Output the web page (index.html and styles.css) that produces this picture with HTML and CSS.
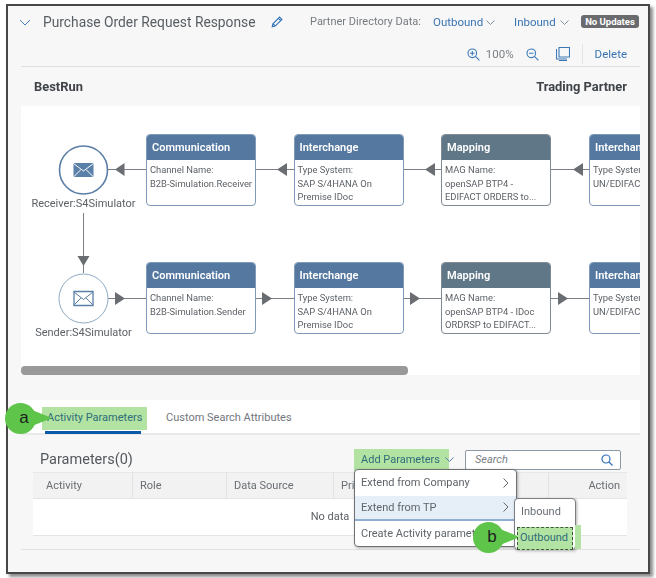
FILE: index.html
```html
<!DOCTYPE html>
<html lang="en">
<head>
<meta charset="utf-8">
<title>Purchase Order Request Response</title>
<link rel="stylesheet" href="styles.css">
</head>
<body>
<main class="frame">
  <header class="title-row">
    <svg class="chev-main" viewBox="0 0 12 7" width="12" height="7"><path d="M1 1l5 5 5-5" fill="none" stroke="#3f7fc0" stroke-width="1"/></svg>
    <h1 class="title">Purchase Order Request Response</h1>
    <svg class="pencil" viewBox="0 0 12 12" width="12" height="12"><path d="M1.2 10.8l.7-3L8.6 1.100l2.300 2.300-6.700 6.700zM7.500 2.300l2.200 2.200M2 7.800l2.200 2.200" fill="none" stroke="#2f72b8" stroke-width="1.100"/></svg>
    <span class="pd-label">Partner Directory Data:</span>
    <span class="link pd-out">Outbound</span>
    <svg class="chev-sm" viewBox="0 0 9 5" width="9" height="5"><path d="M.5.500l4 4 4-4" fill="none" stroke="#7d8fa3"/></svg>
    <span class="link pd-in">Inbound</span>
    <svg class="chev-sm" viewBox="0 0 9 5" width="9" height="5"><path d="M.5.500l4 4 4-4" fill="none" stroke="#7d8fa3"/></svg>
    <span class="badge">No Updates</span>
  </header>

  <div class="toolbar">
    <svg viewBox="0 0 13 13" width="13" height="13"><circle cx="5.300" cy="5.300" r="4.300" fill="none" stroke="#3a78b8" stroke-width="1.100"/><path d="M8.400 8.400l4 4M3 5.300h4.600M5.300 3v4.600" stroke="#3a78b8" stroke-width="1.100"/></svg>
    <span class="zoom-val">100%</span>
    <svg viewBox="0 0 13 13" width="13" height="13"><circle cx="5.300" cy="5.300" r="4.300" fill="none" stroke="#3a78b8" stroke-width="1.100"/><path d="M8.400 8.400l4 4M3 5.300h4.600" stroke="#3a78b8" stroke-width="1.100"/></svg>
    <svg class="tb-copy" viewBox="0 0 14 14" width="14" height="14"><path d="M3 .500h10.500v9.500H3zM1 2.500h-.500v9.500H11M3 13.500h8" fill="none" stroke="#3a78b8" stroke-width="1.100"/></svg>
    <span class="tb-sep"></span>
    <span class="link delete">Delete</span>
  </div>

  <div class="party-row">
    <strong>BestRun</strong>
    <strong>Trading Partner</strong>
  </div>

  <section class="canvas">
    <svg class="wires" viewBox="0 0 619 269" width="619" height="269">
      <g stroke="#7a7f85" stroke-width="1" fill="none">
        <path d="M87 63.500h38M235 63.500h38M383 63.500h37M530 63.500h38M87 192.500h38M235 192.500h38M383 192.500h37M530 192.500h38M62.500 107v60"/>
      </g>
      <g fill="#6a6e73">
        <path d="M94 63.500l9.500-6.500v13zM256 63.500l10-6.500v13zM404 63.500l10-6.500v13zM552 63.500l10-6.500v13z"/>
        <path d="M94 186l10 6.500-10 6.500zM241 186l10 6.500-10 6.500zM389 186l10 6.500-10 6.500zM537 186l10 6.500-10 6.500z"/>
        <path d="M56.500 150h12l-6 10z"/>
      </g>
      <circle cx="62.500" cy="64" r="24" fill="#fff" stroke="#5b7ea6" stroke-width="1.600"/>
      <circle cx="62.500" cy="192.500" r="24.500" fill="#fff" stroke="#8fa9c6" stroke-width="1"/>
      <path d="M52.500 57h20v14h-20z" fill="#5a7fa8"/>
      <path d="M52.500 57.500l10 7.500 10-7.500M52.500 71l7.500-7.500M72.500 71l-7.500-7.500" fill="none" stroke="#fff" stroke-width="1"/>
      <path d="M53 185.500h19v14H53z" fill="#fff" stroke="#5a7fa8" stroke-width="1.300"/>
      <path d="M53 186l9.500 7.500 9.500-7.500M53 199l7-7M72 199l-7-7" fill="none" stroke="#5a7fa8" stroke-width="1"/>
    </svg>
    <span class="ep-label ep-r">Receiver:S4Simulator</span>
    <span class="ep-label ep-s">Sender:S4Simulator</span>

    <article class="node n1 r1"><h3>Communication</h3><p>Channel Name:</p><p>B2B-Simulation.Receiver</p></article>
    <article class="node n2 r1"><h3>Interchange</h3><p>Type System:</p><p class="tight">SAP S/4HANA On</p><p class="tight">Premise IDoc</p></article>
    <article class="node n3 r1 map"><h3>Mapping</h3><p>MAG Name:</p><p class="tight">openSAP BTP4 -</p><p class="tight">EDIFACT ORDERS to...</p></article>
    <article class="node n4 r1"><h3>Interchange</h3><p>Type System:</p><p>UN/EDIFACT</p></article>

    <article class="node n1 r2"><h3>Communication</h3><p>Channel Name:</p><p>B2B-Simulation.Sender</p></article>
    <article class="node n2 r2"><h3>Interchange</h3><p>Type System:</p><p class="tight">SAP S/4HANA On</p><p class="tight">Premise IDoc</p></article>
    <article class="node n3 r2 map"><h3>Mapping</h3><p>MAG Name:</p><p class="tight">openSAP BTP4 - IDoc</p><p class="tight">ORDRSP to EDIFACT...</p></article>
    <article class="node n4 r2"><h3>Interchange</h3><p>Type System:</p><p>UN/EDIFACT</p></article>

    <div class="scroll-thumb"></div>
  </section>

  <nav class="tabs">
    <span class="tab active">Activity Parameters</span>
    <span class="tab">Custom Search Attributes</span>
  </nav>

  <section class="params">
    <div class="params-head">
      <h2>Parameters(0)</h2>
      <div class="add-btn">Add Parameters</div>
      <svg class="chev-add" viewBox="0 0 9 5" width="9" height="5"><path d="M.5.500l4 4 4-4" fill="none" stroke="#4f7fa8"/></svg>
      <div class="search"><em>Search</em>
        <svg viewBox="0 0 12 12" width="12" height="12"><circle cx="5" cy="5" r="4" fill="none" stroke="#2f72b8" stroke-width="1.200"/><path d="M8 8l3.500 3.500" stroke="#2f72b8" stroke-width="1.300"/></svg>
      </div>
    </div>
    <div class="table">
      <div class="thead">
        <span>Activity</span><span>Role</span><span>Data Source</span><span>Pri</span><span class="t-action">Action</span>
      </div>
      <div class="tbody">No data</div>
    </div>
  </section>
  <div class="foot-line"></div>

  <ul class="menu">
    <li>Extend from Company<svg viewBox="0 0 6 10" width="6" height="10"><path d="M.5.500l4.500 4.500-4.500 4.500" fill="none" stroke="#666"/></svg></li>
    <li class="hot">Extend from TP<svg viewBox="0 0 6 10" width="6" height="10"><path d="M.5.500l4.500 4.500-4.500 4.500" fill="none" stroke="#666"/></svg></li>
    <li>Create Activity parameter</li>
  </ul>
  <ul class="submenu">
    <li>Inbound</li>
    <li class="focus">Outbound</li>
  </ul>
  <div class="hl-sub"></div>
  <div class="bubble bubble-a">a</div>
  <div class="bubble bubble-b">b</div>
</main>
</body>
</html>
```
FILE: styles.css
```css
* { box-sizing: border-box; }
html, body { margin: 0; padding: 0; background: #fff; }
body { width: 656px; height: 578px; overflow: hidden; font-family: Roboto, "Open Sans", sans-serif; color: #54595e; }
h1, h2, h3, p, ul { margin: 0; padding: 0; font-weight: normal; }
ul { list-style: none; }

.frame { position: relative; margin: 4px 0 0 6px; width: 644px; height: 570px; border: 2px solid #474747; background: #f7f7f7; box-shadow: 3px 3px 3px rgba(0,0,0,.45); filter: blur(.3px); }

.title-row { height: 32px; display: flex; align-items: center; padding-left: 11px; }
.chev-main { flex: none; }
.title { margin-left: 12px; font-size: 13.800px; color: #595e63; white-space: nowrap; width: 228px; }
.pencil { flex: none; }
.pd-label { margin-left: 27px; font-size: 11px; color: #777c81; width: 123px; white-space: nowrap; margin-top: -2px; }
.link { color: #3a74b2; font-size: 11.500px; white-space: nowrap; }
.pd-out { width: 53px; }
.pd-in { margin-left: 19px; width: 44px; }
.chev-sm { flex: none; margin-left: 0; }
.pd-in + .chev-sm { margin-left: 2px; }
.badge { margin-left: 12px; width: 58px; height: 13px; border-radius: 3px; background: #696b6e; color: #fff; font-size: 9.500px; font-weight: 700; line-height: 13px; text-align: center; white-space: nowrap; margin-top: -2px; }

.toolbar { height: 29px; margin: 0 8px 0 13px; border-bottom: 1px solid #dfdfdf; display: flex; align-items: center; justify-content: flex-end; padding: 4px 13px 0 0; }
.toolbar svg { flex: none; }
.zoom-val { margin: 0 12px 0 6px; font-size: 11.500px; color: #7b8085; }
.tb-copy { margin-left: 17px; }
.tb-sep { width: 1px; height: 20px; background: #e4e4e4; margin: 0 12px 0 12px; }
.delete { font-size: 11.500px; }

.party-row { height: 39px; margin: 0 8px 0 13px; padding: 0 13px; display: flex; align-items: center; justify-content: space-between; font-size: 12.900px; color: #3f4347; }

.canvas { position: relative; height: 269px; margin: 0 8px 0 13px; background: #fff; overflow: hidden; }
.wires { position: absolute; left: 0; top: 0; }
.ep-label { position: absolute; width: 120px; left: 2.500px; text-align: center; font-size: 11px; color: #5c6166; white-space: nowrap; }
.ep-r { top: 91px; }
.ep-s { top: 220px; }

.node { position: absolute; width: 110px; height: 72px; background: #fff; border: 1px solid #7f9ab8; border-radius: 4px; overflow: hidden; font-size: 9.400px; color: #5c6166; }
.node h3 { height: 26px; margin: -1px -1px 3px; background: #5578a0; color: #fff; font-size: 11px; font-weight: 600; line-height: 28px; padding-left: 6px; white-space: nowrap; }
.node p { padding-left: 3px; line-height: 14px; white-space: nowrap; }
.node p.tight { line-height: 13px; }
.node.map { border-color: #7f8a94; }
.node.map h3 { background: #607787; }
.n1 { left: 125px; }
.n2 { left: 272.500px; }
.n3 { left: 420px; }
.n4 { left: 568px; }
.r1 { top: 28px; }
.r2 { top: 156px; }

.scroll-thumb { position: absolute; left: 0; top: 260px; width: 387px; height: 9px; border-radius: 4px; background: #999; }

.tabs { position: relative; z-index: 0; margin: 25px 8px 0 13px; height: 35px; background: #fff; border-bottom: 2px solid #e9e9e9; display: flex; font-size: 11px; padding-left: 25px; }
.tab { position: relative; height: 33px; line-height: 36px; color: #72777c; white-space: nowrap; margin-right: 22px; }
.tab.active { width: 96px; color: #2e6d78; border-bottom: 3px solid #0a5aa8; height: 34px; margin-right: 25px; margin-left: -1px; padding-left: 2px; }
.tab.active::before { content: ""; position: absolute; z-index: -1; left: -3px; top: 7px; width: 105px; height: 23px; background: #b2e3a3; }

.params { margin: 13px 21px 0 25px; }
.params-head { height: 23px; display: flex; align-items: center; }
.params-head h2 { margin-left: 7px; font-size: 14.500px; color: #54595e; width: 314px; white-space: nowrap; }
.add-btn { width: 95px; height: 22px; line-height: 22px; background: #b2e3a3; color: #2e6d78; font-size: 11px; text-align: left; padding-left: 7px; white-space: nowrap; }
.chev-add { margin-left: -4px; flex: none; }
.search { margin-left: 11px; width: 156px; height: 20px; background: #fff; border: 1px solid #8b98a6; border-radius: 2px; display: flex; align-items: center; justify-content: space-between; padding: 0 7px 0 9px; font-size: 11px; color: #7b8085; }

.table { margin-top: 1px; }
.thead { height: 27px; display: grid; grid-template-columns: 100px 94px 107px 215px 78px; background: #f2f2f2; border-top: 1px solid #e7e7e7; border-bottom: 1px solid #e4e4e4; font-size: 11px; color: #696e73; }
.thead span { line-height: 25px; padding-left: 7px; border-right: 1px solid #e2e2e2; white-space: nowrap; }
.thead span:first-child { padding-left: 13px; }
.thead .t-action { text-align: right; padding-right: 7px; border-right: 0; }
.tbody { height: 37px; background: #fff; border-bottom: 1px solid #e4e4e4; text-align: center; line-height: 35px; font-size: 11px; color: #5c6166; }
.foot-line { height: 1px; margin: 13px 8px 0 13px; background: #e2e2e2; }

.menu { position: absolute; left: 346px; top: 463px; width: 163px; height: 78px; background: #fff; border: 1px solid #6e7174; border-radius: 4px; box-shadow: 1px 1px 3px rgba(0,0,0,.3); font-size: 11px; color: #5f6469; overflow: hidden; }
.menu li { height: 25.500px; display: flex; align-items: center; justify-content: space-between; padding: 0 7px 0 6px; white-space: nowrap; }
.menu li.hot { background: #e6eff8; border-bottom: 2px solid #8fb0d2; }
.submenu { position: absolute; left: 506px; top: 492px; width: 62px; height: 52px; background: #fff; border: 1px solid #7b7e81; border-radius: 4px; box-shadow: 1px 1px 3px rgba(0,0,0,.3); font-size: 11px; color: #696e73; }
.submenu li { height: 26px; line-height: 25px; padding-left: 6px; }
.submenu li.focus { position: relative; z-index: 1; height: 23px; margin: 2px 2px 0 2px; padding-left: 3px; line-height: 22px; color: #2e6d78; background: #b2e3a3; outline: 1px dashed #3e5a3a; outline-offset: -1px; }
.hl-sub { position: absolute; left: 567px; top: 519px; width: 6px; height: 24px; background: #b2e3a3; }

.bubble { position: absolute; width: 31px; height: 31px; border-radius: 50%; background: #5fc44a; color: #1d1d1d; font-family: "Liberation Sans", sans-serif; font-size: 17px; line-height: 29px; padding-left: 7px; text-align: center; }
.bubble::after { content: ""; position: absolute; right: -16px; top: 7px; border-left: 20px solid #5fc44a; border-top: 8.500px solid transparent; border-bottom: 8.500px solid transparent; }
.bubble-a { left: -3px; top: 397px; }
.bubble-b { left: 465px; top: 516px; }
```
